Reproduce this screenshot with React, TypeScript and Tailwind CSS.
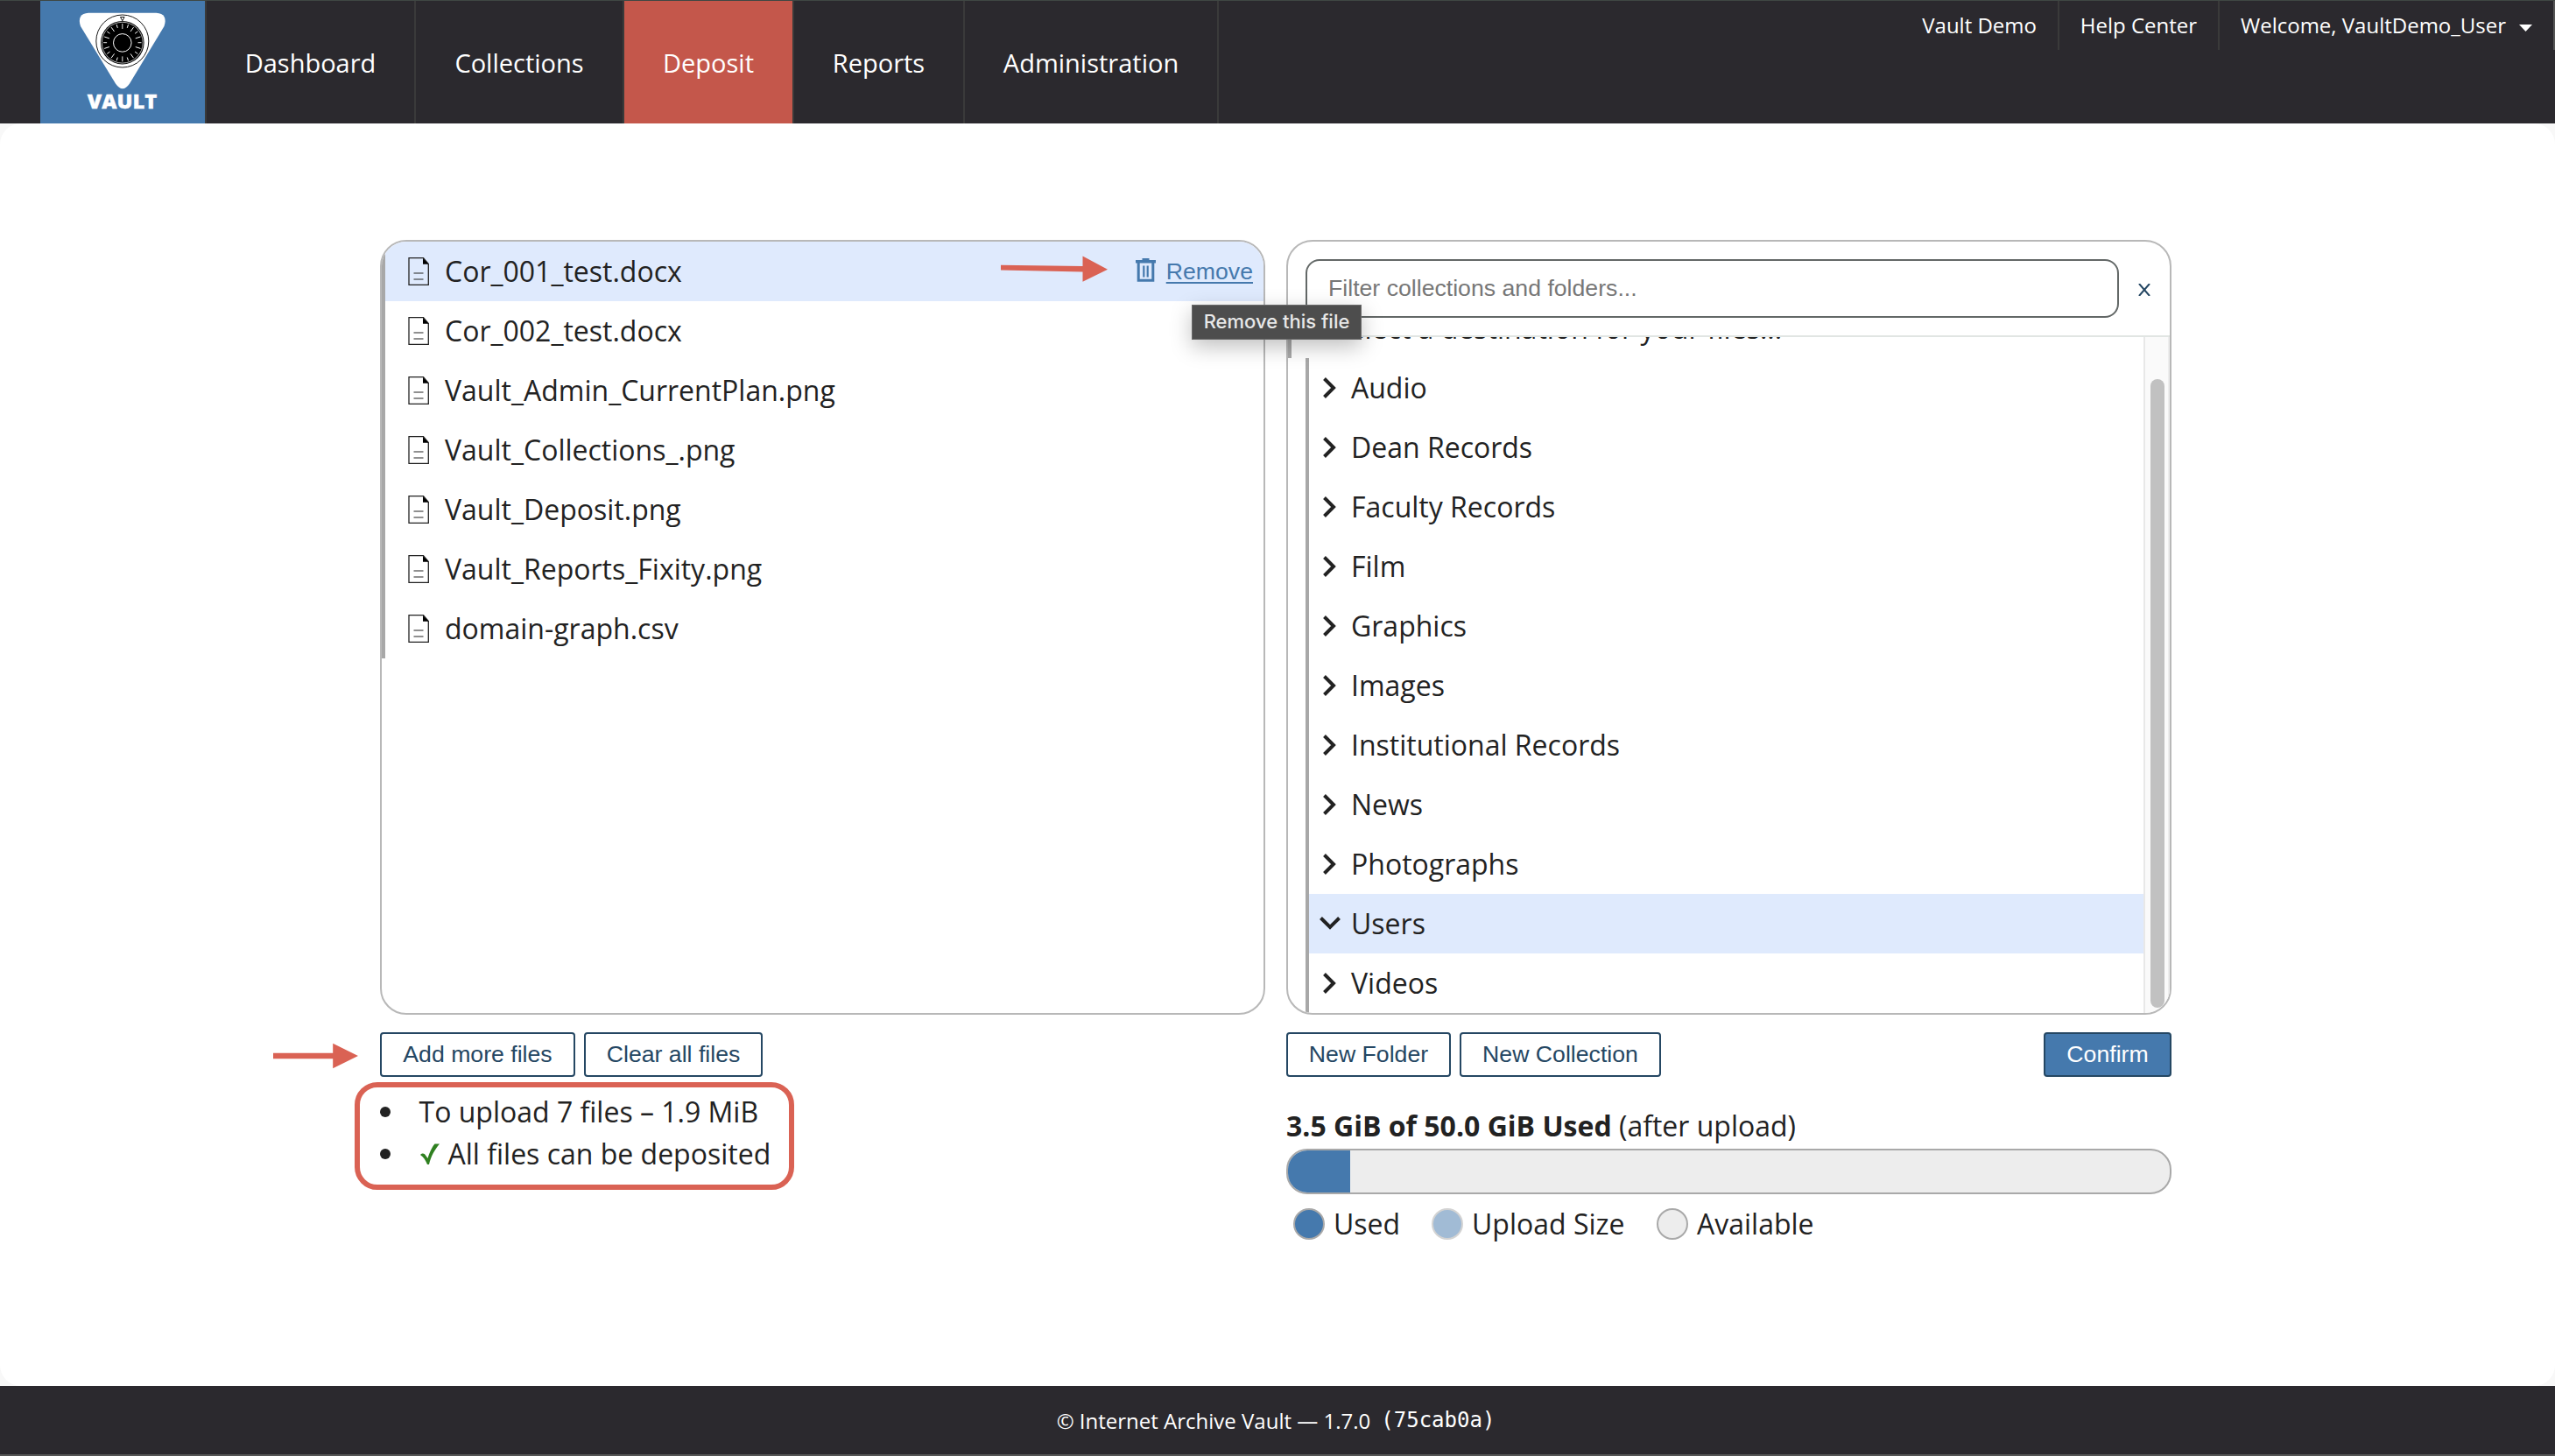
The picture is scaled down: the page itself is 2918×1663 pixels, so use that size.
import React from "react";

const files = [
  "Cor_001_test.docx",
  "Cor_002_test.docx",
  "Vault_Admin_CurrentPlan.png",
  "Vault_Collections_.png",
  "Vault_Deposit.png",
  "Vault_Reports_Fixity.png",
  "domain-graph.csv",
];

const folders = [
  "Audio",
  "Dean Records",
  "Faculty Records",
  "Film",
  "Graphics",
  "Images",
  "Institutional Records",
  "News",
  "Photographs",
  "Users",
  "Videos",
];

const ticks = Array.from({ length: 20 }, (_, i) => i * 18);

function Logo() {
  return (
    <svg className="block h-[140px] w-[188px]" viewBox="46 1 188 140">
      <path
        d="M101 14.7H178.500Q192 15.500 187.500 30L148 95.500Q140 107 132 95.500L92 30Q87.500 15.500 101 14.700Z"
        fill="#fff"
      />
      <circle cx="139.800" cy="47" r="30" fill="none" stroke="#000" strokeWidth="0.900" />
      <circle cx="139.800" cy="48.700" r="24.800" fill="#000" />
      <circle cx="139.800" cy="48.700" r="23.400" fill="none" stroke="#fff" strokeWidth="0.700" />
      {ticks.map((a) => (
        <line
          key={a}
          x1="139.800"
          y1="27"
          x2="139.800"
          y2={a % 36 === 0 ? "33" : "31"}
          stroke="#fff"
          strokeWidth="0.900"
          transform={`rotate(${a} 139.800 48.700)`}
        />
      ))}
      <circle cx="139.800" cy="48.900" r="10.300" fill="none" stroke="#fff" strokeWidth="1" />
      <path d="M137.500 19.500h4.600l-2.300 4.300z" fill="none" stroke="#000" strokeWidth="0.900" />
      <text
        x="139.500"
        y="124"
        textAnchor="middle"
        textLength="79.500"
        lengthAdjust="spacingAndGlyphs"
        fill="#fff"
        stroke="#fff"
        strokeWidth="0.400"
        fontSize="22.800"
        className="font-['Open_Sans'] font-extrabold"
      >
        VAULT
      </text>
    </svg>
  );
}

function FileIcon() {
  return (
    <svg className="ml-[26px] block h-8 w-6 shrink-0" viewBox="0 0 24 32" fill="none" stroke="#222">
      <path d="M1 .7H17.500L23.300 7.500V31.300H1Z" strokeWidth="1.300" />
      <path d="M17 .7L23.500 7.800H17Z" fill="#000" stroke="none" />
      <path d="M6.500 18h11M6.500 25h11" strokeWidth="1.200" />
    </svg>
  );
}

function TrashIcon() {
  return (
    <svg className="mb-1 h-[27px] w-[23px]" viewBox="0 0 23 27" fill="none" stroke="#4579ad">
      <path d="M0 3.800H23" strokeWidth="3.400" />
      <path d="M7.500 1.500H15.500" strokeWidth="3" />
      <path d="M3.200 4V25.300H19.800V4" strokeWidth="3" />
      <path d="M9.300 8.500V21.500M13.700 8.500V21.500" strokeWidth="2.200" />
    </svg>
  );
}

function Chevron({ open }: { open: boolean }) {
  return (
    <svg className="ml-3 block h-6 w-6 shrink-0" viewBox="0 0 24 24" fill="none" stroke="#222" strokeWidth="4">
      <path d={open ? "M1.500 5.500L12 16L22.500 5.500" : "M5.500 1.500L16 12L5.500 22.500"} />
    </svg>
  );
}

function NavItem({ label, className }: { label: string; className: string }) {
  return (
    <a className={`flex h-full items-center justify-center border-r-2 border-[#3a3a3a] pt-px text-[29px] ${className}`}>
      {label}
    </a>
  );
}

function Button({ label, className }: { label: string; className: string }) {
  return (
    <button
      className={`h-[51px] rounded-[4px] border-2 border-[#254763] font-['Liberation_Sans',sans-serif] text-[26.670px] leading-[30px] ${className}`}
    >
      <span className="relative -top-px whitespace-nowrap">{label}</span>
    </button>
  );
}

function Legend({ label, dot, className }: { label: string; dot: string; className: string }) {
  return (
    <div className={`flex items-center ${className}`}>
      <span className={`mr-[10px] size-9 rounded-full border-2 border-[#a9a9a9] ${dot}`} />
      <span className="leading-9">{label}</span>
    </div>
  );
}

export default function App() {
  return (
    <div className="relative flex h-[1663px] w-[2918px] flex-col overflow-hidden bg-[#f8f8f8] font-['Open_Sans',sans-serif] text-[32px] text-[#222]">
      <header className="flex h-[141px] shrink-0 justify-between border-t border-[#3f4744] bg-[#2b292e] text-white">
        <nav className="flex pl-[46px]">
          <div className="w-[190px] border-r-2 border-[#3a3a3a] bg-[#4579ad]">
            <Logo />
          </div>
          <NavItem label="Dashboard" className="w-[239px]" />
          <NavItem label="Collections" className="w-[238px]" />
          <NavItem label="Deposit" className="w-[194px] bg-[#c4574b]" />
          <NavItem label="Reports" className="w-[195px]" />
          <NavItem label="Administration" className="w-[290px]" />
        </nav>
        <div className="flex h-14 text-[24px]">
          <a className="flex items-center border-r-2 border-[#3a3a3a] pr-6">Vault Demo</a>
          <a className="flex w-[183px] items-center justify-center border-r-2 border-[#3a3a3a]">Help Center</a>
          <a className="flex w-[383px] items-center border-r-2 border-[#555] pl-6">
            Welcome, VaultDemo_User
            <svg className="mt-[5px] ml-[15px] h-2 w-[15px]" viewBox="0 0 15 8">
              <path d="M0 0H15L7.500 8Z" fill="#fff" />
            </svg>
          </a>
        </div>
      </header>

      <main className="grow rounded-3xl bg-white px-[434px] pt-[133px]">
        <div className="grid w-[2046px] grid-cols-2 gap-x-6">
          <section>
            <div className="h-[885px] overflow-hidden rounded-[30px] border-2 border-[#b8b8b8]">
              <ul className="border-l-4 border-[#a8a8a8]">
                {files.map((f, i) => (
                  <li key={f} className={`flex h-[68px] items-center ${i === 0 ? "bg-[#dfeafd]" : ""}`}>
                    <FileIcon />
                    <span className="ml-[18px] grow">{f}</span>
                    {i === 0 && (
                      <span className="mr-3 flex items-center gap-3 font-['Liberation_Sans',sans-serif] text-[26.670px] text-[#4579ad]">
                        <TrashIcon />
                        <a className="underline decoration-2 underline-offset-[3px]">Remove</a>
                      </span>
                    )}
                  </li>
                ))}
              </ul>
            </div>
            <div className="mt-5 flex gap-[10px]">
              <Button label="Add more files" className="w-[223px] text-[#254763]" />
              <Button label="Clear all files" className="w-[204px] text-[#254763]" />
            </div>
            <ul className="mt-4 leading-[48px]">
              <li className="flex items-center">
                <i className="mr-[33px] size-[11.500px] rounded-full bg-[#222]" />
                To upload 7 files – 1.9 MiB
              </li>
              <li className="flex items-center">
                <i className="mr-[33px] size-[11.500px] rounded-full bg-[#222]" />
                <svg className="mr-[10px] ml-px h-6 w-[22px]" viewBox="0 0 22 24">
                  <path
                    d="M0 13C2.500 10.500 5 11.500 6 13.500L8.500 17C11 9 14.500 2.500 16.500 .500H22C16.500 7 12 15 10 24H8C6 19.500 4 15.500 0 13Z"
                    fill="#2f8020"
                  />
                </svg>
                All files can be deposited
              </li>
            </ul>
          </section>

          <section>
            <div className="flex h-[885px] flex-col overflow-hidden rounded-[30px] border-2 border-[#b8b8b8]">
              <div className="flex h-[109px] shrink-0 border-b-2 border-[#e1e5e3] pt-5 pl-5">
                <div className="flex h-[67px] w-[929px] items-center rounded-2xl border-2 border-[#636867] pb-[2px] pl-6 font-['Liberation_Sans',sans-serif] text-[26.670px] text-[#777]">
                  Filter collections and folders...
                </div>
                <svg className="mt-[28px] ml-[22px] h-[14px] w-[14px]" viewBox="0 0 14 14">
                  <path d="M1 0L13 14M13 0L1 14" stroke="#254763" strokeWidth="2" />
                </svg>
              </div>
              <div className="flex min-h-0 grow">
                <div className="flex grow flex-col justify-end overflow-hidden">
                  <div className="flex h-[68px] shrink-0 items-center border-l-4 border-[#a8a8a8] pl-12">
                    Select a destination for your files...
                  </div>
                  <ul className="ml-5 shrink-0 border-l-4 border-[#a8a8a8]">
                    {folders.map((f) => (
                      <li key={f} className={`flex h-[68px] items-center ${f === "Users" ? "bg-[#dfeafd]" : ""}`}>
                        <Chevron open={f === "Users"} />
                        <span className="ml-3">{f}</span>
                      </li>
                    ))}
                  </ul>
                </div>
                <div className="flex w-[30px] shrink-0 border-r-2 border-l-2 border-r-[#ededed] border-l-[#e8e8e8] bg-[#fafafa] pt-12 pb-[6px] pl-[6px]">
                  <div className="w-4 rounded-full bg-[#c1c1c1]" />
                </div>
              </div>
            </div>
            <div className="mt-5 flex gap-[10px]">
              <Button label="New Folder" className="w-[188px] text-[#254763]" />
              <Button label="New Collection" className="w-[230px] text-[#254763]" />
              <Button label="Confirm" className="ml-auto w-[146px] bg-[#4579ad] text-white" />
            </div>
            <p className="mt-[34px] leading-[44px]">
              <b>3.5 GiB of 50.0 GiB Used</b> (after upload)
            </p>
            <div className="mt-1 h-[52px] overflow-hidden rounded-3xl border-2 border-[#a9a9a9] bg-[#ededed]">
              <div className="h-full w-[71px] bg-[#4579ad]" />
            </div>
            <div className="mt-4 flex pl-2">
              <Legend label="Used" dot="bg-[#4579ad]" className="w-[158px]" />
              <Legend label="Upload Size" dot="bg-[#4579ad] opacity-50" className="w-[257px]" />
              <Legend label="Available" dot="bg-[#ededed]" className="" />
            </div>
          </section>
        </div>
      </main>

      <footer className="flex h-20 shrink-0 items-center justify-center border-b-2 border-[#555] bg-[#2b292e] pt-px pr-1 text-[24px] text-white">
        © Internet Archive Vault — 1.7.0
        <span className="mb-[2px] ml-3 font-['DejaVu_Sans_Mono',monospace]">(75cab0a)</span>
      </footer>

      <div className="absolute top-[348px] left-[1361px] flex h-10 w-[194px] items-center justify-center border border-[#6b6b6b] bg-[#4d4d4d] pb-[2px] font-['Inter',sans-serif] text-[22px] font-medium tracking-[0] text-[#e8e8e8] shadow-[0_8px_24px_rgba(0,0,0,0.25)]">
        Remove this file
      </div>
      <svg className="absolute top-[290px] left-[1143px] h-8 w-[123px]" viewBox="0 0 123 32">
        <path d="M0 12.700L93.500 14V2.500L122 17.700L93.500 31.700V20.500L0 18.600Z" fill="#da6254" />
      </svg>
      <svg className="absolute top-[1190px] left-[312px] h-8 w-[98px]" viewBox="0 0 98 32">
        <path d="M0 12.800H68.200V1.700L97 16L68.200 30.300V19.200H0Z" fill="#da6254" />
      </svg>
      <div className="absolute top-[1236px] left-[405px] h-[123px] w-[502px] rounded-[26px] border-6 border-[#da6254]" />
    </div>
  );
}
